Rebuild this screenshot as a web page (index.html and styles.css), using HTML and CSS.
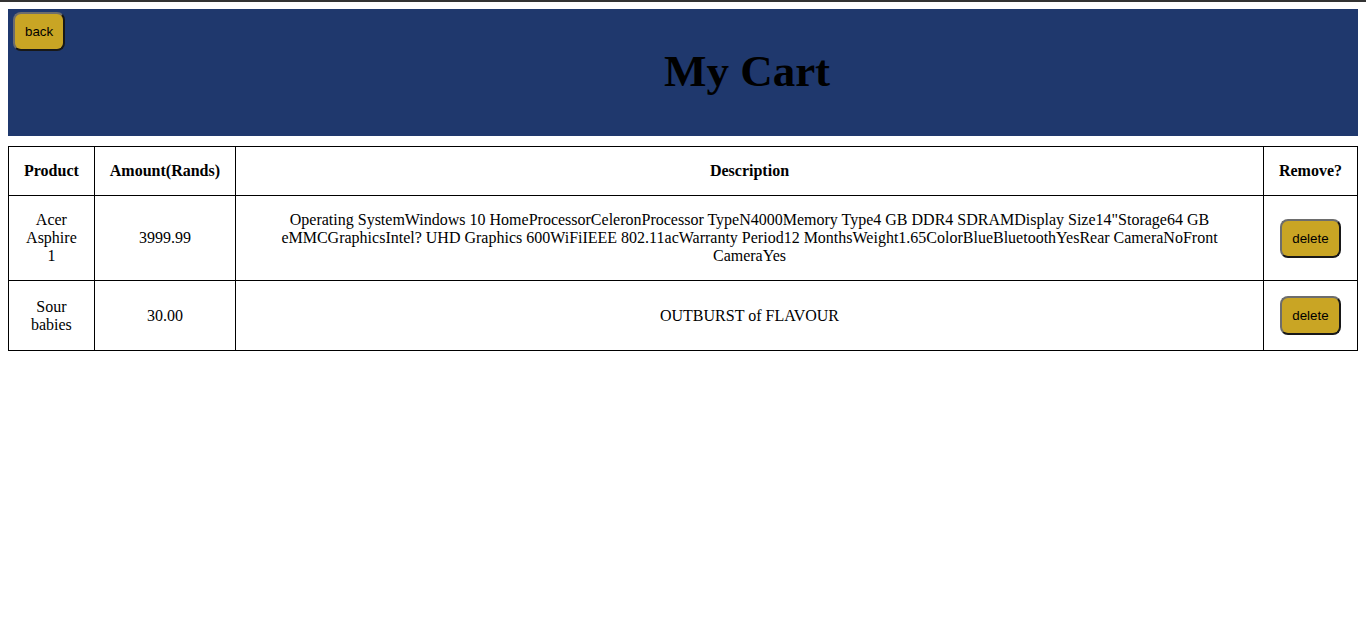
FILE: index.html
```html
<!DOCTYPE html>
<html>
<head>
<meta charset="utf-8">
<title>My Cart</title>
<link rel="stylesheet" href="styles.css">
</head>
<body>
<div class="topline"></div>
<header class="banner">
  <button class="btn back-btn">back</button>
  <h1 class="title">My Cart</h1>
</header>
<table class="cart">
  <thead>
    <tr>
      <th class="narrow">Product</th>
      <th class="narrow">Amount(Rands)</th>
      <th>Description</th>
      <th class="narrow">Remove?</th>
    </tr>
  </thead>
  <tbody>
    <tr>
      <td>Acer Asphire 1</td>
      <td>3999.99</td>
      <td>Operating SystemWindows 10 HomeProcessorCeleronProcessor TypeN4000Memory Type4 GB DDR4 SDRAMDisplay Size14"Storage64 GB eMMCGraphicsIntel? UHD Graphics 600WiFiIEEE 802.11acWarranty Period12 MonthsWeight1.65ColorBlueBluetoothYesRear CameraNoFront CameraYes</td>
      <td><button class="btn">delete</button></td>
    </tr>
    <tr>
      <td>Sour babies</td>
      <td>30.00</td>
      <td>OUTBURST of FLAVOUR</td>
      <td><button class="btn">delete</button></td>
    </tr>
  </tbody>
</table>
</body>
</html>
```
FILE: styles.css
```css
html, body {
  margin: 0;
  padding: 0;
  background: #fff;
}
body {
  font-family: "Liberation Serif", "Times New Roman", serif;
  font-size: 16px;
  color: #000;
  padding: 0 8px;
}
.topline {
  height: 2px;
  background: #333;
  margin: 0 -8px 7px;
}
.banner {
  display: grid;
  background: #1f386d;
}
.banner > * {
  grid-area: 1 / 1;
}
.btn {
  font-family: "Liberation Sans", Arial, sans-serif;
  font-size: 13.33px;
  color: #000;
  background: #c9a524;
  border: 2px outset #6d6d6d;
  border-radius: 8px;
  padding: 10px 10px;
  cursor: pointer;
}
.back-btn {
  justify-self: start;
  align-self: start;
  margin: 3px 0 0 5px;
}
.title {
  margin: 37px 0 40px;
  padding-left: 128px;
  text-align: center;
  font-size: 45px;
  font-weight: bold;
  line-height: 50px;
}
.cart {
  width: 100%;
  margin-top: 10px;
  border-collapse: collapse;
}
.cart th, .cart td {
  border: 1px solid #000;
  padding: 15px;
  text-align: center;
}
.cart th {
  font-weight: bold;
}
.cart .narrow {
  width: 1%;
}
```
